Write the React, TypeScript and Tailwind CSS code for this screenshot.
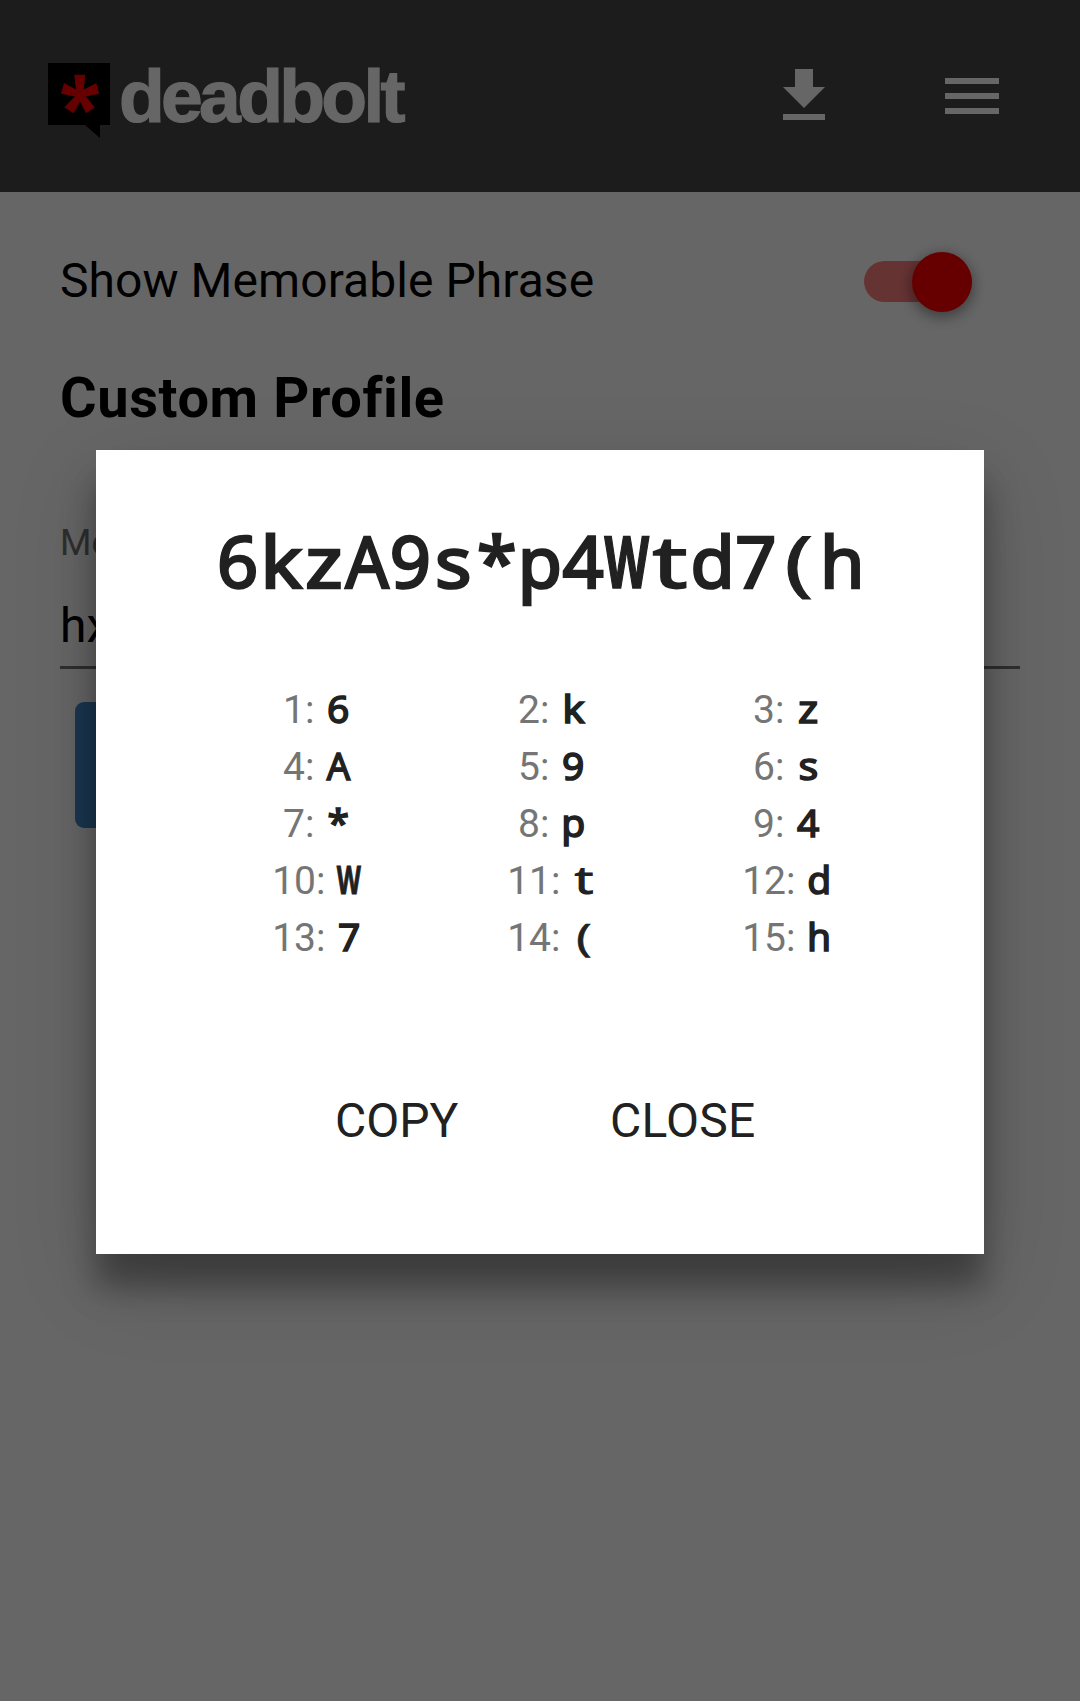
const glyphStyle: Record<string, string> = {
  k: "scale-x-[1.08]",
  z: "scale-x-[1.1]",
  A: "scale-x-[0.94]",
  s: "scale-x-[1.06]",
  W: "scale-x-[0.64] font-bold [-webkit-text-stroke:0.024em_#212121]",
  t: "scale-x-[1.34] [-webkit-text-stroke:0.026em_#212121]",
  "(": "scale-x-[1.35] [-webkit-text-stroke:0.012em_#212121]",
};

const password = "6kzA9s*p4Wtd7(h".split("");

function Glyph({ char }: { char: string }) {
  return (
    <span className="inline-flex w-[0.6em] justify-center">
      <span className={glyphStyle[char] ?? ""}>{char}</span>
    </span>
  );
}

function Logo() {
  return (
    <div className="flex items-start">
      <svg className="mt-[63px] h-[76px] w-[62px]" viewBox="0 0 62 76">
        <path d="M0 0H62V62H52V75L37 62H0Z" fill="#000" />
        <path
          d="M26.3 11.7H37.3L35.8 26.5L48.3 20L51.3 30.7L37.8 33.5L47 44.5L38 50.3L32 38.5L25.7 50.3L16.3 44.3L26.8 33.5L13 30.7L16 20L28 26.5Z"
          fill="#f00"
        />
      </svg>
      <span className="mt-[53px] ml-[9px] font-['Liberation_Sans',sans-serif] text-[75px] leading-[86px] font-bold tracking-[-3.7px] text-white [-webkit-text-stroke:1.2px_#fff]">
        deadbolt
      </span>
    </div>
  );
}

function Header() {
  return (
    <header className="flex h-[192px] items-start bg-[#464646] pl-[48px]">
      <Logo />
      <div className="flex-1" />
      <svg className="mt-[60px] mr-[96px] size-[72px]" viewBox="0 0 24 24" fill="#fff">
        <path d="M19 12h-4V6H9v6H5l7 7zM5 21v2h14v-2z" transform="translate(0 -3)" />
      </svg>
      <svg className="mt-[60px] mr-[72px] size-[72px]" viewBox="0 0 24 24" fill="#fff">
        <path d="M3 18h18v-2H3v2zm0-5h18v-2H3v2zm0-7v2h18V6H3z" />
      </svg>
    </header>
  );
}

function Toggle() {
  return (
    <div className="relative h-[60px] w-[108px]">
      <div className="mt-[9px] h-[41px] w-full rounded-full bg-[#ff8080]" />
      <div className="absolute top-0 right-0 size-[60px] rounded-full bg-[#f00] shadow-[0_3px_15px_rgba(0,0,0,0.35),0_6px_15px_rgba(0,0,0,0.15)]" />
    </div>
  );
}

function Dialog() {
  return (
    <div className="flex h-[804px] w-[888px] flex-col bg-white text-[#212121] shadow-[0_33px_30px_rgba(0,0,0,0.34),0_27px_80px_rgba(0,0,0,0.15)]">
      <h2 className="mt-[61px] flex justify-center font-['Noto_Sans',sans-serif] text-[72px] leading-[98px] [-webkit-text-stroke:0.036em_#212121]">
        {password.map((char, i) => (
          <Glyph key={i} char={char} />
        ))}
      </h2>
      <div className="mt-[70px] ml-[103px] grid w-[705px] grid-cols-3">
        {password.map((char, i) => (
          <div key={i} className="flex h-[57px] items-baseline justify-center gap-[12px] text-[39px] leading-[57px]">
            <span className="text-[#757575]">{i + 1}:</span>
            <span className="font-['Noto_Sans',sans-serif] [-webkit-text-stroke:0.041em_#212121]">
              <Glyph char={char} />
            </span>
          </div>
        ))}
      </div>
      <div className="mt-[121px] flex pl-[239px] text-[48px] leading-[72px]">
        <button className="w-[275px] text-left">COPY</button>
        <button className="text-left tracking-[0.2px]">CLOSE</button>
      </div>
    </div>
  );
}

export default function App() {
  return (
    <div className="relative h-[1701px] w-[1080px] overflow-hidden bg-white font-['Roboto',sans-serif] text-black">
      <Header />
      <main className="px-[60px]">
        <div className="flex items-start justify-between pt-[60px] pr-[48px]">
          <span className="pt-px text-[48px] leading-[56px] tracking-[0.06px]">Show Memorable Phrase</span>
          <Toggle />
        </div>
        <h1 className="mt-[53px] text-[56px] leading-[66px] font-bold tracking-[0.6px]">Custom Profile</h1>
        <div className="mt-[91px] border-b-[3px] border-[#757575]">
          <div className="text-[36px] leading-[42px] text-[#757575]">Memo</div>
          <div className="mt-[32px] pb-[10px] text-[48px] leading-[60px]">hx</div>
        </div>
        <button className="mt-[33px] ml-[15px] block h-[126px] w-[360px] rounded-[9px] bg-[#428bca]" />
      </main>
      <div className="absolute inset-0 flex items-start justify-center bg-black/60 pt-[450px]">
        <Dialog />
      </div>
    </div>
  );
}
